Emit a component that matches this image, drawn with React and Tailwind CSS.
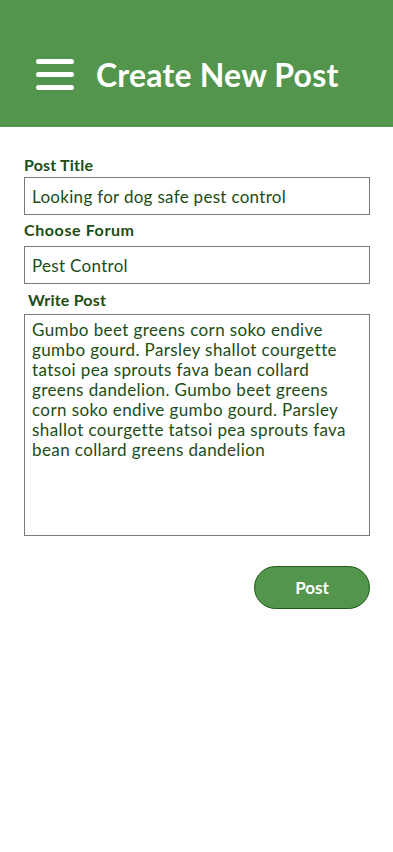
import { useState } from "react";

export default function App() {
  const [title, setTitle] = useState("Looking for dog safe pest control");
  const [forum, setForum] = useState("Pest Control");
  const [body, setBody] = useState(
    "Gumbo beet greens corn soko endive gumbo gourd. Parsley shallot courgette tatsoi pea sprouts fava bean collard greens dandelion. Gumbo beet greens corn soko endive gumbo gourd. Parsley shallot courgette tatsoi pea sprouts fava bean collard greens dandelion"
  );

  return (
    <div className="min-h-[852px] w-full bg-white font-['Lato','Open_Sans',sans-serif]">
      {/* Header */}
      <div className="h-[127px] bg-[#53954d] flex items-center pt-[22px] pl-[36px]">
        <div className="flex flex-col gap-[8px] w-[38px]">
          <div className="h-[5px] rounded-full bg-white" />
          <div className="h-[5px] rounded-full bg-white" />
          <div className="h-[5px] rounded-full bg-white" />
        </div>
        <h1 className="ml-[22px] text-white text-[32px] font-bold tracking-[0.2px]">
          Create New Post
        </h1>
      </div>

      {/* Form */}
      <div className="pl-[24px] pr-[23px] pt-[28px]">
        <label className="block text-[16px] font-bold text-[#1b4d16] leading-[20px] tracking-[0.2px]">
          Post Title
        </label>
        <input
          value={title}
          onChange={(e) => setTitle(e.target.value)}
          className="mt-[2px] w-full h-[38px] border border-[#7a7a7a] px-[7px] text-[17px] tracking-[0.3px] text-[#1b4d16] outline-none"
        />

        <label className="block mt-[5px] text-[16px] font-bold text-[#1b4d16] leading-[20px] tracking-[0.6px]">
          Choose Forum
        </label>
        <input
          value={forum}
          onChange={(e) => setForum(e.target.value)}
          className="mt-[6px] w-full h-[38px] border border-[#7a7a7a] px-[7px] text-[17px] tracking-[0.3px] text-[#1b4d16] outline-none"
        />

        <label className="block mt-[6px] pl-[4px] text-[16px] font-bold text-[#1b4d16] leading-[20px] tracking-[0.2px]">
          Write Post
        </label>
        <textarea
          value={body}
          onChange={(e) => setBody(e.target.value)}
          className="mt-[4px] block w-full h-[222px] border border-[#7a7a7a] px-[7px] pt-[5px] text-[17px] leading-[20px] tracking-[0.4px] text-[#1b4d16] outline-none resize-none"
        />

        <div className="flex justify-end mt-[30px]">
          <button className="w-[116px] h-[43px] rounded-full bg-[#53954d] border border-[#1f5a1a] text-white text-[17px] font-bold">
            Post
          </button>
        </div>
      </div>
    </div>
  );
}
